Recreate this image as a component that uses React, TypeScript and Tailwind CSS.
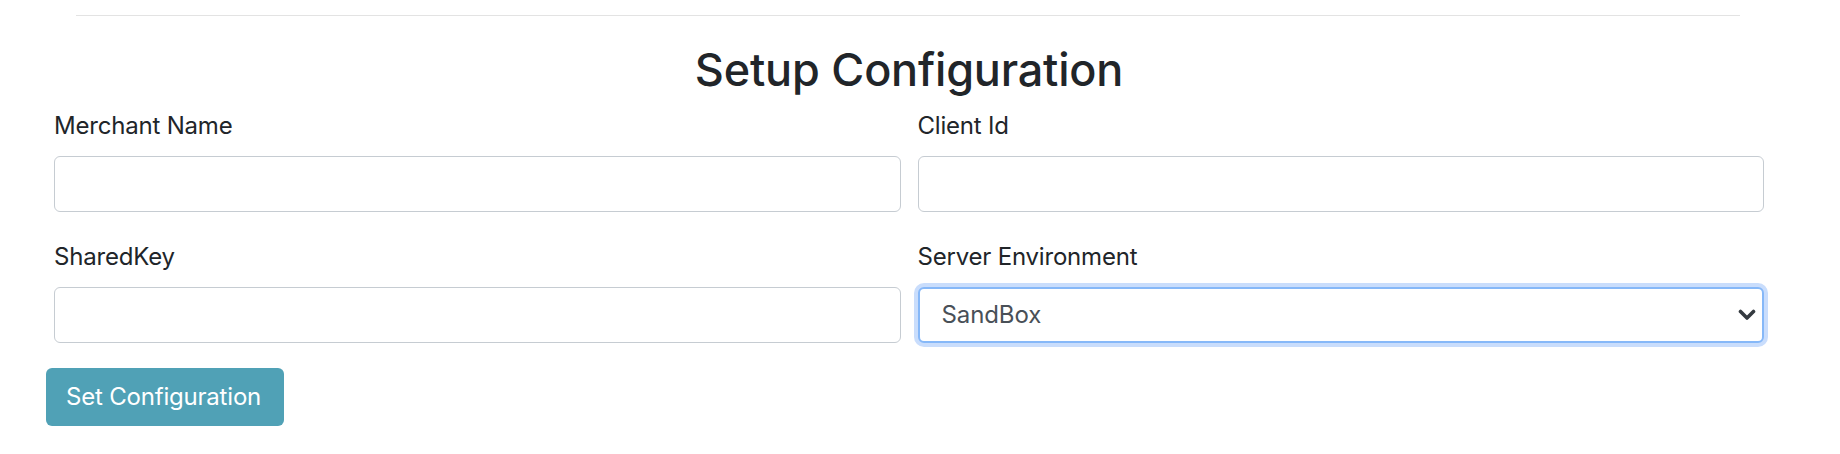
import React from "react";

const font = { fontFamily: "Inter, 'Noto Sans', 'Liberation Sans', sans-serif" };

function Field({ label, children }: { label: string; children: React.ReactNode }) {
  return (
    <div className="flex flex-col">
      <label className="text-[24px] leading-[33px] tracking-[-0.2px] text-[#212529] h-[33px]">{label}</label>
      <div className="mt-[14px]">{children}</div>
    </div>
  );
}

function TextInput() {
  return (
    <input
      type="text"
      className="block w-full h-[56px] rounded-[6px] border border-[#c6ccd2] bg-white px-[18px] text-[24px] text-[#495057] outline-none"
    />
  );
}

export default function App() {
  return (
    <div className="w-full h-[454px] bg-white overflow-hidden" style={font}>
      <div className="pt-[15px] pl-[76px]">
        <div className="w-[1664px] h-px bg-[#e3e3e3]" />
      </div>
      <div className="ml-[54px] w-[1710px]">
        <h2 className="mt-[26px] text-center text-[45px] leading-[55px] font-medium text-[#212529] tracking-[-0.2px]">
          Setup Configuration
        </h2>
        <div className="mt-[12px] grid grid-cols-2 gap-x-[17px] gap-y-[28px]">
          <Field label="Merchant Name">
            <TextInput />
          </Field>
          <Field label="Client Id">
            <TextInput />
          </Field>
          <Field label="SharedKey">
            <TextInput />
          </Field>
          <Field label="Server Environment">
            <div className="relative">
              <select
                defaultValue="SandBox"
                className="block w-full h-[56px] appearance-none rounded-[6px] border-2 border-[#86b8f8] bg-white pl-[22px] pr-[40px] text-[24px] tracking-[-0.1px] text-[#495057] outline-none shadow-[0_0_0_4px_#c9ddfc]"
                style={font}
              >
                <option>SandBox</option>
                <option>Production</option>
              </select>
              <svg
                className="pointer-events-none absolute right-[8px] top-[22px]"
                width="18"
                height="12"
                viewBox="0 0 18 12"
              >
                <path d="M2.5 2.5 L9 9 L15.5 2.5" fill="none" stroke="#343a40" strokeWidth="3.6" strokeLinecap="round" strokeLinejoin="round" />
              </svg>
            </div>
          </Field>
        </div>
        <button className="mt-[25px] -ml-[8px] h-[58px] w-[238px] rounded-[6px] bg-[#50a1b6] text-white text-[24px] tracking-[-0.2px] text-left pl-[20px]">
          Set Configuration
        </button>
      </div>
    </div>
  );
}
